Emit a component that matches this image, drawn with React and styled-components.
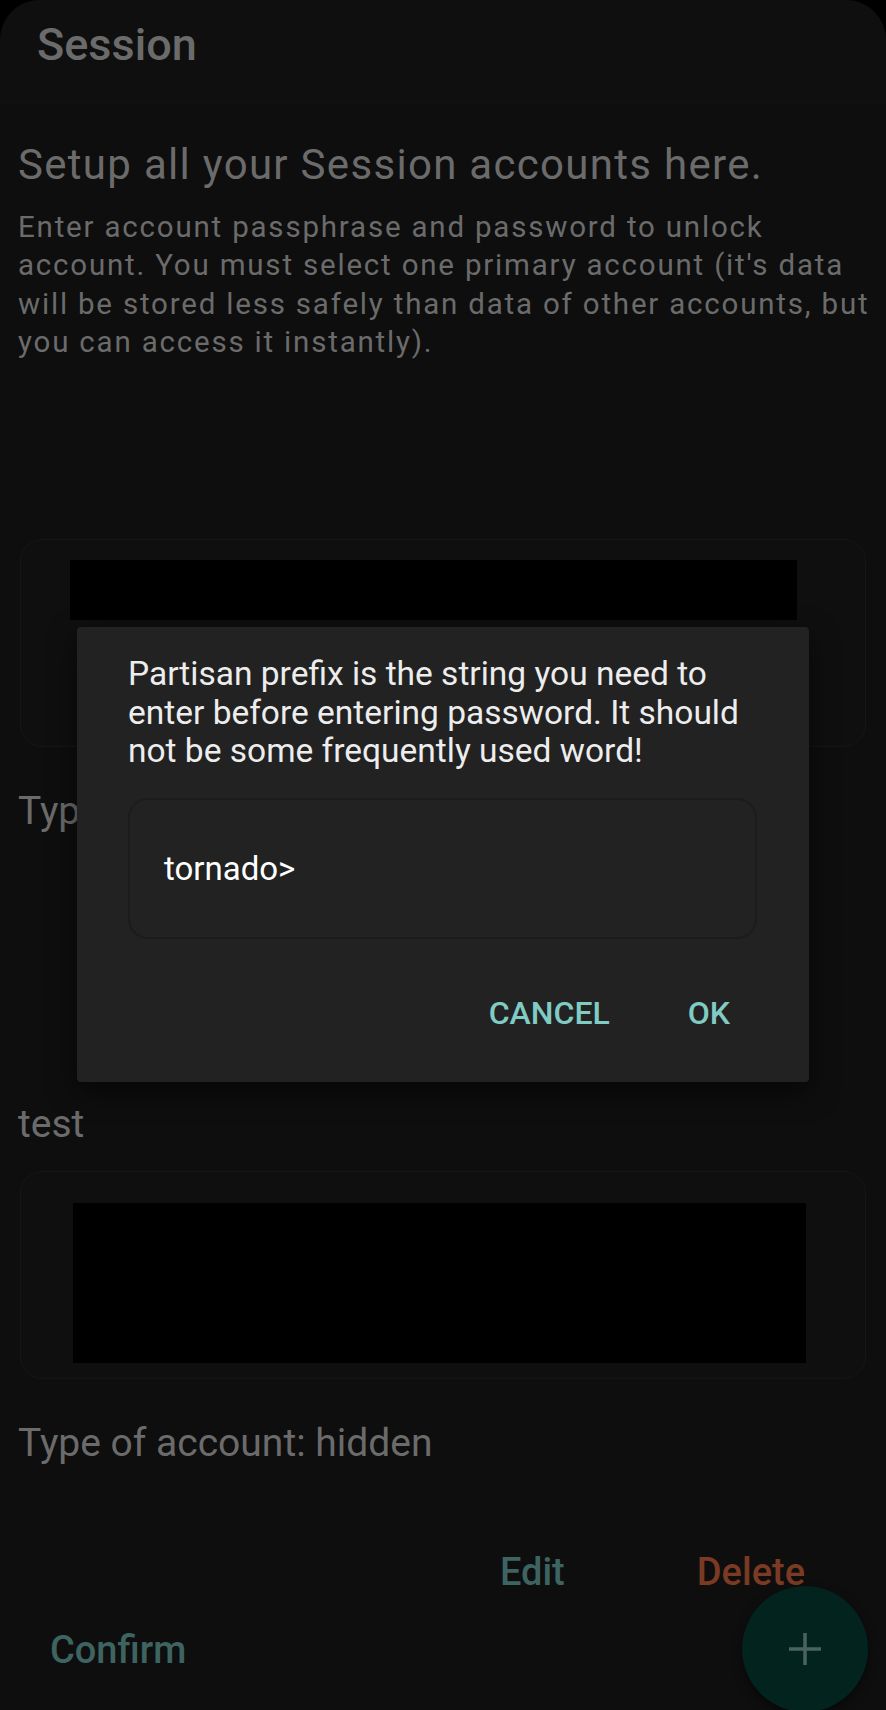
import React from 'react';
import styled, {createGlobalStyle} from 'styled-components';

const GlobalStyle = createGlobalStyle`
  html, body {
    margin: 0;
    padding: 0;
    background: #000000;
  }
  * {
    box-sizing: border-box;
  }
`;

const Screen = styled.div`
  position: relative;
  width: 886px;
  height: 1710px;
  overflow: hidden;
  border-radius: 40px 40px 0 0;
  background-color: #0e0e0e;
  font-family: Roboto, 'Noto Sans', sans-serif;
  color: #6b6b6b;
`;

const AppBar = styled.header`
  height: 104px;
  padding: 22px 0 0 37px;
  background-color: #0f0f0f;
  border-bottom: 1px solid #111111;
`;

const AppTitle = styled.h1`
  margin: 0;
  font-size: 45px;
  line-height: 46px;
  font-weight: 500;
  color: #6b6b6b;
`;

const Content = styled.main`
  display: flex;
  flex-direction: column;
  padding: 0 18px;
`;

const Heading = styled.h2`
  margin: 36px 0 0;
  font-size: 42px;
  line-height: 50px;
  font-weight: 400;
  letter-spacing: 1.3px;
`;

const Intro = styled.p`
  margin: 18px -12px 0 0;
  font-size: 29.5px;
  line-height: 38.3px;
  letter-spacing: 1.8px;
`;

const AccountList = styled.div`
  display: flex;
  flex-direction: column;
  margin-top: ${props => props.offset}px;
`;

const Account = styled.section`
  display: flex;
  flex-direction: column;
  margin-top: ${props => props.gap || 0}px;
`;

const AccountName = styled.div`
  font-size: 39px;
  line-height: 46px;
  margin-bottom: 24px;
`;

const Card = styled.div`
  margin-left: 2px;
  width: 846px;
  height: 208px;
  border-radius: 22px;
  border: 1px solid #161616;
  background-color: #0f0f0f;
  padding: ${props => props.padTop}px 0 0 ${props => props.padLeft}px;
`;

const Redacted = styled.div`
  width: ${props => props.w}px;
  height: ${props => props.h}px;
  background-color: #000000;
`;

const AccountType = styled.div`
  margin-top: 41px;
  font-size: 39px;
  line-height: 46px;
`;

const ActionRow = styled.div`
  display: flex;
  justify-content: flex-end;
  gap: 132px;
  margin-top: 83px;
  padding-right: 63px;
`;

const TextButton = styled.span`
  font-size: 38px;
  line-height: 46px;
  font-weight: 500;
  color: ${props => props.color};
`;

const ConfirmButton = styled(TextButton)`
  margin: 32px 0 0 32px;
`;

const Fab = styled.div`
  position: absolute;
  right: 18px;
  bottom: -2px;
  width: 126px;
  height: 126px;
  border-radius: 50%;
  background-color: #03231f;
  display: flex;
  align-items: center;
  justify-content: center;
  box-shadow: 0 4px 10px rgba(0, 0, 0, 0.5);
`;

const Dialog = styled.div`
  position: absolute;
  left: 77px;
  top: 627px;
  width: 732px;
  height: 455px;
  padding: 28px 30px 0 51px;
  background-color: #222222;
  border-radius: 4px;
  box-shadow: 0 10px 28px rgba(0, 0, 0, 0.55), 0 0 40px rgba(255, 255, 255, 0.015);
  display: flex;
  flex-direction: column;
`;

const DialogMessage = styled.p`
  margin: 0;
  font-size: 33.5px;
  line-height: 38.7px;
  color: #ededed;
`;

const PrefixInput = styled.div`
  margin-top: 27px;
  width: 629px;
  height: 141px;
  border: 2px solid #1c1c1c;
  border-radius: 20px;
  background-color: #222222;
  display: flex;
  align-items: center;
  padding-left: 34px;
  font-size: 33px;
  line-height: 38px;
  color: #ffffff;
`;

const DialogActions = styled.div`
  display: flex;
  justify-content: flex-end;
  gap: 78px;
  margin-top: 55px;
  padding-right: 49px;
`;

const DialogButton = styled.span`
  font-size: 32px;
  line-height: 38px;
  font-weight: 500;
  color: #80cbc4;
`;

const EDIT = '#3e6462';
const DELETE = '#7a3a23';

export default function App() {
  return (
    <>
      <GlobalStyle />
      <Screen>
        <AppBar>
          <AppTitle>Session</AppTitle>
        </AppBar>
        <Content>
          <Heading>Setup all your Session accounts here.</Heading>
          <Intro>
            Enter account passphrase and password to unlock account. You must select one primary
            account (it's data will be stored less safely than data of other accounts, but you can
            access it instantly).
          </Intro>
          <AccountList offset={178}>
            <Account>
              <Card padTop={20} padLeft={49}>
                <Redacted w={727} h={60} />
              </Card>
              <AccountType>Type of account: primary</AccountType>
              <ActionRow>
                <TextButton color={EDIT}>Edit</TextButton>
                <TextButton color={DELETE}>Delete</TextButton>
              </ActionRow>
            </Account>
            <Account gap={138}>
              <AccountName>test</AccountName>
              <Card padTop={31} padLeft={52}>
                <Redacted w={733} h={160} />
              </Card>
              <AccountType>Type of account: hidden</AccountType>
              <ActionRow>
                <TextButton color={EDIT}>Edit</TextButton>
                <TextButton color={DELETE}>Delete</TextButton>
              </ActionRow>
            </Account>
          </AccountList>
          <ConfirmButton color={EDIT}>Confirm</ConfirmButton>
        </Content>
        <Fab>
          <svg width="34" height="34" viewBox="0 0 34 34">
            <path d="M17 1v32M1 17h32" stroke="#4b6360" strokeWidth="3.5" fill="none" />
          </svg>
        </Fab>
        <Dialog>
          <DialogMessage>
            Partisan prefix is the string you need to enter before entering password. It should
            not be some frequently used word!
          </DialogMessage>
          <PrefixInput>tornado&gt;</PrefixInput>
          <DialogActions>
            <DialogButton>CANCEL</DialogButton>
            <DialogButton>OK</DialogButton>
          </DialogActions>
        </Dialog>
      </Screen>
    </>
  );
}
